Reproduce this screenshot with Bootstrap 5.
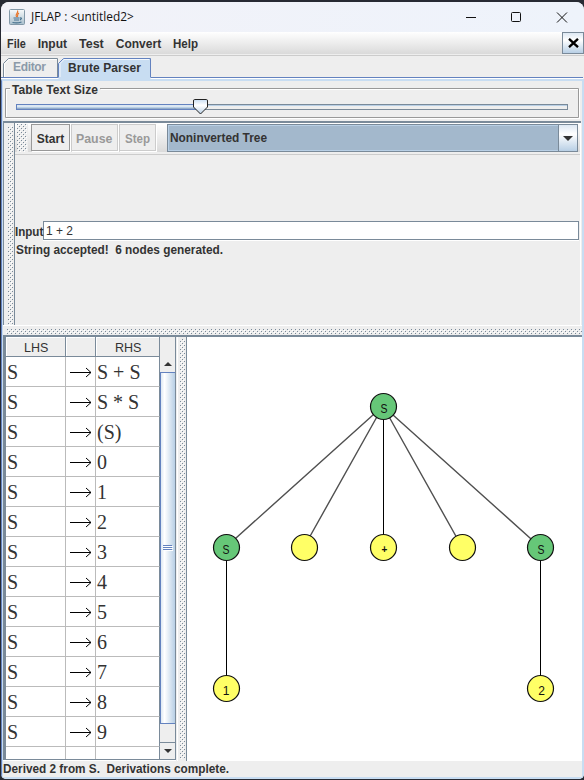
<!DOCTYPE html>
<html lang="en">
<head>
<meta charset="utf-8">
<title>JFLAP : &lt;untitled2&gt;</title>
<link href="https://cdn.jsdelivr.net/npm/bootstrap@5.3.0/dist/css/bootstrap.min.css" rel="stylesheet">
<style>
body{width:584px;height:780px;overflow:hidden;background:#272a33;font:bold 12px/16px "Liberation Sans",Arial,sans-serif;color:#333}
svg{display:block;flex:none}
.win{width:583px;height:777px;margin:2px 0 0 1px;border-radius:8px 8px 5px 5px;overflow:hidden;background:#eee}
.titlebar{height:30px;background:linear-gradient(90deg,#f2f2f8,#eef3fb);flex:none}
.app-icon{margin-left:8px}
.title-text{font:12px/16px "Open Sans","Noto Sans",sans-serif;color:#111;margin-left:6px}
.win-controls{margin-right:16px}
.fit{display:inline-block;white-space:pre;transform-origin:0 50%}
.menubar{height:24px;background:linear-gradient(#fff,#dadada 22px,#eee 22px);border-bottom:1px solid #ccc;flex:none}
.menus{padding-left:6px;gap:12px}
.menubar a{color:#333;text-decoration:none}
.closebtn{width:22px;height:22px;border:1px solid #7a8a99;background:linear-gradient(#dde8f3,#fff 35%,#b8cfe5)}
.tabs{height:23px;flex:none}
.pane{border:2px solid #c8ddf2;border-left:1px solid #6382bf;padding-left:1px;background:linear-gradient(90deg,#c8ddf2 1px,#eee 1px);flex:1;min-height:0}
.sizebox{height:39px;flex:none}
.top-split{width:578px;height:204px;margin-top:1px;flex:none;border-top:2px solid #7a8a99;border-left:1px solid #7a8a99}
.work{min-width:0;border-right:1px solid #fff}
.toolbar{height:32px;background:linear-gradient(#fff,#dadada 29px,#eee 29px);border-bottom:1px solid #ccc;flex:none;padding:1px 1px 0 2px}
.tb{width:39px;height:27px;margin-left:3px;border:1px solid #999;background:#eee;display:flex;align-items:center;justify-content:center;box-shadow:1px 1px #fff;padding-top:2px}
.tb.off{border-color:#ccc;color:#999;width:47px;margin-left:1px}
.tb.off.step{width:37px}
.combo{width:411px;height:28px;margin-left:11px;border:1px solid #7a8a99;background:#a3b8cc;box-shadow:inset 0 0 0 1px #b8cfe5}
.combo-text{padding:5px 0 0 2px}
.combo-arrow{width:19px;height:26px;border-left:1px solid #7a8a99;background:linear-gradient(#dde8f3,#fff 35%,#b8cfe5)}
.input-row{margin-top:66px}
.input-label{width:28px;padding-top:3px;flex:none}
.field{height:19px;margin-right:1px;background:#fff;border:1px solid #7a8a99;box-shadow:0 1px #fff;font-weight:400;line-height:19px;padding-left:2px}
.result{padding:2px 0 0 1px}
.lower{min-height:0;background:#fff;border-top:2px solid #7a8a99}
.rules-pane{border:solid #7a8a99;border-width:0 1px 1px 3px;height:423px;width:173px;flex:none}
.rules-view{width:154px;flex:none}
.rules{width:154px;table-layout:fixed;border-collapse:separate;border-spacing:0;background:#fff;font:20px/29px "Liberation Serif","Times New Roman",serif;color:#333}
.rules .c1{width:60px}.rules .c2{width:30px}.rules .c3{width:64px}
.rules th{height:20px;background:#eee;font:13px/17px "Liberation Sans",sans-serif;text-align:center;padding:2px 0 0 2px;border-right:1px solid #7a8a99;border-bottom:1px solid #7a8a99;box-shadow:inset 1px 1px #fff}
.rules td{height:30px;padding:2px 0 0 1px;line-height:27px;border-right:1px solid #bbb;border-bottom:1px solid #bbb}
.rules td:last-child{border-right-color:#7a8a99}
.rules td svg{margin-left:3px}
.scroll{background:#eee}
.scroll-head{height:20px}
.thumb{height:352px;border:1px solid #6382bf;border-right:0;background:linear-gradient(90deg,#dde8f3,#fff 25%,#b8cfe5)}
.track{height:19px;border-bottom:1px solid #7a8a99}
.arrowbox{height:15px;background:#eee}
.arrowbox.up{padding-bottom:2px}
.vsplit{background:#eee}
.tree{font-weight:400;font-size:12px}
.status{height:16px;flex:none;background:#eee}
</style>
<script src="https://cdn.jsdelivr.net/npm/bootstrap@5.3.0/dist/js/bootstrap.bundle.min.js"></script>
</head>
<body>
<div class="win d-flex flex-column">
  <header class="titlebar d-flex align-items-center">
    <svg class="app-icon" width="16" height="16" viewBox="0 0 16 16"><defs><linearGradient id="ig" x2="0" y2="1"><stop stop-color="#f8fafb"/><stop offset="1" stop-color="#a9bfcd"/></linearGradient></defs><rect x=".5" y=".5" width="15" height="15" rx="1" fill="url(#ig)" stroke="#8298a8"/><path d="M8.500 1.500C10 4 5.500 5 7.500 8M10 4C7.500 5.500 9.500 6.500 8 8" fill="none" stroke="#e8762c" stroke-width="1.200"/><path d="M4.500 9h6M5 11h5M3.500 13.500q5 1 9-.5M11 9q3-.5 0 2" fill="none" stroke="#47718f" stroke-width="1.100"/></svg>
    <span class="title-text"><span class="fit" data-w="103">JFLAP : &lt;untitled2&gt;</span></span>
    <svg class="win-controls ms-auto" width="104" height="14" viewBox="0 0 104 14" fill="none" stroke="#111"><path d="M2 7.500h10"/><rect x="47.500" y="2.500" width="9" height="9" rx="1"/><path d="M93 2.500l10 10M103 2.500l-10 10"/></svg>
  </header>
  <nav class="menubar d-flex">
    <div class="menus d-flex align-items-center">
      <a href="#"><span class="fit" data-w="19">File</span></a><a href="#"><span class="fit" data-w="29">Input</span></a><a href="#"><span class="fit" data-w="25">Test</span></a><a href="#"><span class="fit" data-w="45">Convert</span></a><a href="#"><span class="fit" data-w="25">Help</span></a>
    </div>
    <div class="closebtn ms-auto d-flex align-items-center justify-content-center"><svg width="11" height="10" viewBox="0 0 11 10"><path d="M1 .8l9 8.400M10 .8L1 9.200" stroke="#000" stroke-width="2.300"/></svg></div>
  </nav>
  <div class="tabs">
    <svg width="582" height="23" viewBox="1 56 582 23"><path d="M3.500 77V63.500L8.500 58.500H57.500V77" fill="#eee" stroke="#7a8a99"/><path d="M4.500 77V64L9 59.500H57" fill="none" stroke="#fff"/><path d="M1 77.500H583" stroke="#6382bf"/><path d="M1 78.500H583" stroke="#fff"/><path d="M58.500 79V63L63.500 58.500H150.500V79Z" fill="#c8ddf2"/><path d="M58.500 77V63.500L63.500 58.500H150.500V77" fill="none" stroke="#6382bf"/><path d="M60 77V63.500L64 59.500H149" fill="none" stroke="#fff" stroke-opacity=".8"/><text x="13" y="71" textLength="33" fill="#8b9aa9">Editor</text><text x="68" y="72" textLength="73" fill="#333">Brute Parser</text></svg>
  </div>
  <main class="pane d-flex flex-column">
    <section class="sizebox">
      <svg width="579" height="39" viewBox="3 81 579 39"><path d="M11 89.500H6.500V118.500H579.500V89.500H101" fill="none" stroke="#fff"/><path d="M10 88.500H5.500V117.500H578.500V88.500H100" fill="none" stroke="#999"/><text x="12" y="94" textLength="86" fill="#333">Table Text Size</text><rect x="16.500" y="104.500" width="551" height="5" fill="#eee" stroke="#7a8a99"/><path d="M17 105.500H567" stroke="#b8cfe5"/><rect x="16.500" y="104.500" width="184" height="5" fill="#b8cfe5" stroke="#6382bf"/><path d="M17 106H200" stroke="#fff"/><path d="M17 108.500H200" stroke="#93abc8"/><path d="M194.500 99.500H206.500Q207.500 99.500 207.500 101V107L200.500 114L193.500 107V101Q193.500 99.500 194.500 99.500Z" fill="url(#kg)" stroke="#222"/><defs><linearGradient id="kg" x2="0" y2="1"><stop stop-color="#c8ddf2"/><stop offset=".4" stop-color="#fff"/><stop offset="1" stop-color="#b8cfe5"/></linearGradient></defs></svg>
    </section>
    <section class="top-split d-flex">
      <svg width="11" height="202"><defs><pattern id="dp" width="4" height="4" patternUnits="userSpaceOnUse"><path d="M0 0h1v1H0zM2 2h1v1H2z" fill="#7a8a99"/><path d="M1 1h1v1H1zM3 3h1v1H3z" fill="#fff"/></pattern></defs><rect x="4" y="3" width="5" height="199" fill="url(#dp)"/><path d="M10.500 0V202" stroke="#7a8a99"/></svg>
      <div class="work flex-fill d-flex flex-column">
        <div class="toolbar d-flex">
          <svg width="11" height="28"><rect width="11" height="28" fill="#eee"/><rect width="10" height="28" fill="url(#dp)"/></svg>
          <div class="tb"><span class="fit" data-w="27">Start</span></div>
          <div class="tb off"><span class="fit" data-w="36">Pause</span></div>
          <div class="tb off step"><span class="fit" data-w="25">Step</span></div>
          <div class="combo d-flex"><span class="combo-text"><span class="fit" data-w="97">Noninverted Tree</span></span><div class="combo-arrow ms-auto d-flex align-items-center justify-content-center"><svg width="10" height="5"><path d="M0 0h10L5 5z" fill="#333"/></svg></div></div>
        </div>
        <div class="input-row d-flex"><span class="input-label"><span class="fit" data-w="28">Input</span></span><div class="field flex-fill"><span class="fit" data-w="27">1 + 2</span></div></div>
        <div class="result"><span class="fit" data-w="207">String accepted!  6 nodes generated.</span></div>
      </div>
    </section>
    <svg width="579" height="10"><path d="M0 .5H579" stroke="#fff"/><rect x="3" y="4" width="576" height="5" fill="url(#dp)"/></svg>
    <section class="lower d-flex flex-fill">
      <div class="rules-pane d-flex overflow-hidden">
        <div class="rules-view overflow-hidden"><table class="rules"><colgroup><col class="c1"><col class="c2"><col class="c3"></colgroup><thead><tr><th><span class="fit" data-w="24">LHS</span></th><th></th><th><span class="fit" data-w="26">RHS</span></th></tr></thead><tbody id="rows"></tbody></table></div>
        <div class="scroll flex-fill"><div class="scroll-head"></div><div class="arrowbox up d-flex align-items-center justify-content-center"><svg width="8" height="4"><path d="M0 4L4 0L8 4z" fill="#333"/></svg></div><div class="thumb d-flex align-items-center justify-content-center"><svg width="10" height="6"><path d="M0 .5h9M0 2.500h9M0 4.500h9" stroke="#6382bf"/><path d="M1 1.500h9M1 3.500h9M1 5.500h9" stroke="#fff"/></svg></div><div class="track"></div><div class="arrowbox d-flex align-items-center justify-content-center"><svg width="8" height="4"><path d="M0 0h8L4 4z" fill="#333"/></svg></div></div>
      </div>
      <svg class="vsplit" width="11" height="425"><path d="M1.500 0V425" stroke="#fff"/><rect x="4" y="2" width="5" height="420" fill="url(#dp)"/><path d="M10.500 0V425" stroke="#7a8a99"/></svg>
      <svg class="tree" width="394" height="424" viewBox="187 337 394 424" text-anchor="middle">
        <g stroke="#505050" stroke-width="1.400"><path d="M383 406L226 547M383 406L304 547M383 406L462 547M383 406L540 547"/></g>
        <path d="M383.500 406V547M226.500 547V688M540.500 547V688" stroke="#000"/>
        <g stroke="#111" stroke-width="1.200" fill="#ff6"><g fill="#66c778"><circle cx="383.500" cy="406.500" r="13"/><circle cx="226.500" cy="547.500" r="13"/><circle cx="540.500" cy="547.500" r="13"/></g><circle cx="304.500" cy="547.500" r="13"/><circle cx="383.500" cy="547.500" r="13"/><circle cx="462.500" cy="547.500" r="13"/><circle cx="226.500" cy="688.500" r="13"/><circle cx="540.500" cy="688.500" r="13"/></g>
        <g fill="#111"><text x="384" y="413" textLength="7" lengthAdjust="spacingAndGlyphs">S</text><text x="226" y="554" textLength="7" lengthAdjust="spacingAndGlyphs">S</text><text x="541" y="554" textLength="7" lengthAdjust="spacingAndGlyphs">S</text><text x="384.500" y="553" font-size="10" font-weight="700">+</text><text x="226" y="695">1</text><text x="541.500" y="695">2</text></g>
      </svg>
    </section>
    <footer class="status"><span class="fit" data-w="226">Derived 2 from S.  Derivations complete.</span></footer>
  </main>
</div>
<script>
document.getElementById('rows').innerHTML=['S + S','S * S','(S)',0,1,2,3,4,5,6,7,8,9,''].map(r=>`<tr><td>${r===''?'':'S'}</td><td>${r===''?'':'<svg width="22" height="11"><path d="M0 5.500H21M16 1L21 5.500L16 10" fill="none" stroke="#000"/></svg>'}</td><td>${r}</td></tr>`).join('');
// Scale each label to its toolkit text width
document.querySelectorAll('.fit').forEach(e=>{const w=e.offsetWidth,t=+e.dataset.w;e.style.marginRight=(t-w)+'px';e.style.transform=`scaleX(${t/w})`;});
</script>
</body>
</html>
